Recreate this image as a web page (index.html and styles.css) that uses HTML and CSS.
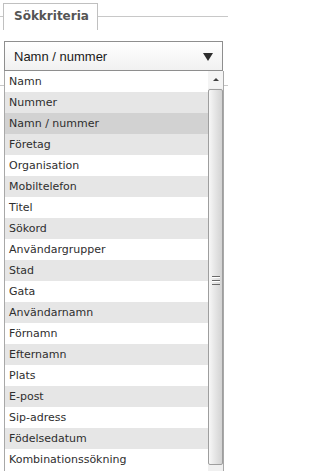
FILE: index.html
```html
<!DOCTYPE html>
<html lang="sv">
<head>
<meta charset="utf-8">
<title>Sökkriteria</title>
<link rel="stylesheet" href="styles.css">
</head>
<body>
<div class="tabs">
  <div class="tab-line tab-line-left"></div>
  <div class="tab">Sökkriteria</div>
  <div class="tab-line tab-line-right"></div>
</div>
<div class="field">
  <div class="select">
    <span class="select-value">Namn / nummer</span>
    <span class="select-arrow"></span>
  </div>
  <div class="under-rule"></div>
  <div class="dropdown">
    <ul class="options">
      <li class="opt">Namn</li>
      <li class="opt">Nummer</li>
      <li class="opt selected">Namn / nummer</li>
      <li class="opt">Företag</li>
      <li class="opt">Organisation</li>
      <li class="opt">Mobiltelefon</li>
      <li class="opt">Titel</li>
      <li class="opt">Sökord</li>
      <li class="opt">Användargrupper</li>
      <li class="opt">Stad</li>
      <li class="opt">Gata</li>
      <li class="opt">Användarnamn</li>
      <li class="opt">Förnamn</li>
      <li class="opt">Efternamn</li>
      <li class="opt">Plats</li>
      <li class="opt">E-post</li>
      <li class="opt">Sip-adress</li>
      <li class="opt">Födelsedatum</li>
      <li class="opt">Kombinationssökning</li>
    </ul>
    <div class="scrollbar">
      <div class="scroll-up"><span class="up-arrow"></span></div>
      <div class="thumb"><span class="grip"></span></div>
    </div>
  </div>
</div>
</body>
</html>
```

FILE: styles.css
```css
html, body {
  margin: 0;
  padding: 0;
  background: #ffffff;
  overflow: hidden;
  height: 471px;
}

body {
  width: 228px;
}

.tabs {
  display: flex;
  align-items: flex-start;
  height: 30px;
}

.tab-line {
  height: 16px;
  border-bottom: 1px solid #c8c8c8;
}

.tab-line-left {
  width: 3px;
}

.tab-line-right {
  flex: 1;
}

.tab {
  margin-top: 3px;
  box-sizing: border-box;
  width: 95px;
  height: 27px;
  border: 1px solid #c0c0c0;
  border-bottom: none;
  padding: 5px 0 0 10px;
  font-family: "DejaVu Sans", Verdana, sans-serif;
  font-weight: bold;
  font-size: 12px;
  line-height: 14px;
  color: #555555;
  background: #ffffff;
}

.field {
  position: relative;
  margin-top: 11px;
}

.select {
  box-sizing: border-box;
  margin-left: 4px;
  width: 219px;
  height: 30px;
  border: 1px solid #8e8e8e;
  background: linear-gradient(#ffffff, #f1f1f1);
  display: flex;
  align-items: center;
  justify-content: space-between;
  padding: 0 9px 0 9px;
}

.select-value {
  font-family: "Liberation Sans", Arial, sans-serif;
  font-size: 13px;
  color: #1a1a1a;
}

.select-arrow {
  width: 0;
  height: 0;
  border-left: 5px solid transparent;
  border-right: 5px solid transparent;
  border-top: 8px solid #2e2e2e;
  margin-top: 1px;
}

.under-rule {
  height: 14px;
  border-bottom: 1px solid #c8c8c8;
}

.dropdown {
  position: absolute;
  top: 30px;
  left: 4px;
  box-sizing: border-box;
  width: 220px;
  height: 410px;
  border-left: 1px solid #a8a8a8;
  border-right: 1px solid #a8a8a8;
  background: #ffffff;
  display: flex;
}

.options {
  list-style: none;
  margin: 0;
  padding: 0;
  flex: 1;
}

.opt {
  height: 21px;
  line-height: 22px;
  padding-left: 4px;
  font-family: "DejaVu Sans", Verdana, sans-serif;
  font-size: 11px;
  color: #2e2e2e;
  white-space: nowrap;
}

.opt:nth-child(even) {
  background: #e6e6e6;
}

.opt.selected {
  background: #d2d2d2;
}

.scrollbar {
  width: 15px;
  display: flex;
  flex-direction: column;
  background: #f0f0f0;
}

.scroll-up {
  height: 17px;
  display: flex;
  align-items: center;
  justify-content: center;
  background: #f4f4f4;
}

.up-arrow {
  width: 0;
  height: 0;
  border-left: 3px solid transparent;
  border-right: 3px solid transparent;
  border-bottom: 3px solid #404040;
}

.thumb {
  margin: 1px 0 0 0;
  height: 376px;
  box-sizing: border-box;
  border: 1px solid #9e9e9e;
  border-radius: 2px;
  background: linear-gradient(to right, #f7f7f7 0%, #e6e6e6 45%, #d3d3d3 100%);
  display: flex;
  align-items: center;
  justify-content: center;
}

.grip {
  width: 8px;
  height: 7px;
  border-top: 1px solid #6a6a6a;
  border-bottom: 1px solid #6a6a6a;
  background: linear-gradient(#ffffff 0, #ffffff 1px, transparent 1px, transparent 3px, #6a6a6a 3px, #6a6a6a 4px, #ffffff 4px, #ffffff 5px, transparent 5px);
  margin-top: 6px;
}
```
